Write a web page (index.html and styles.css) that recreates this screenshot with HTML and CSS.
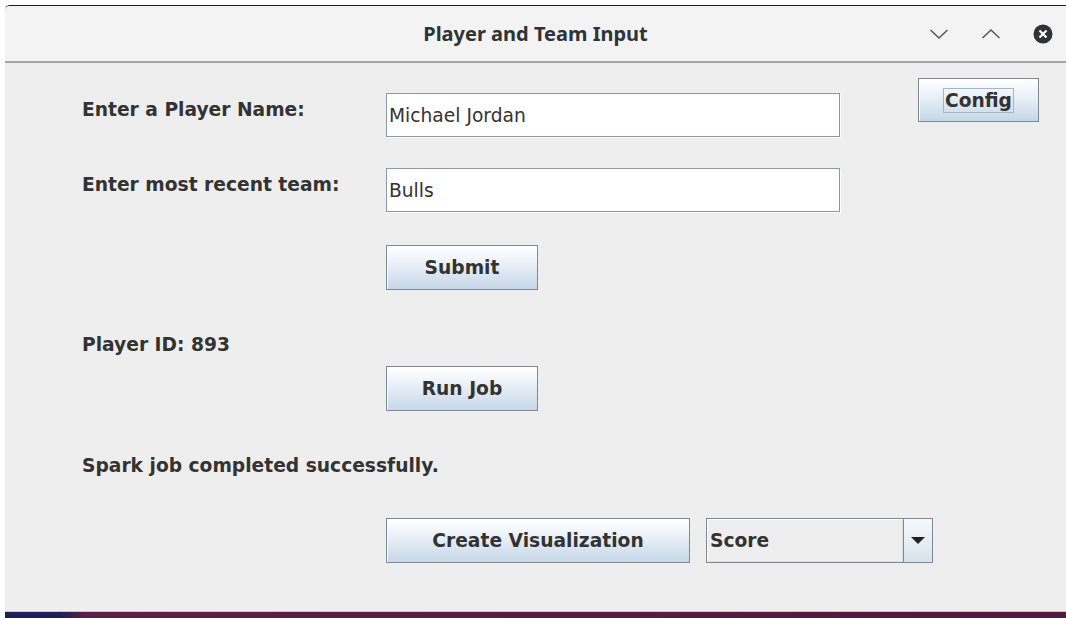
FILE: index.html
```html
<!DOCTYPE html>
<html lang="en">
<head>
<meta charset="utf-8">
<title>Player and Team Input</title>
<link rel="stylesheet" href="styles.css">
</head>
<body>
<div class="window">
  <header class="titlebar">
    <div class="title">Player and Team Input</div>
    <div class="controls">
      <svg class="ctl" viewBox="0 0 20 20" width="20" height="20"><path d="M1.5 6 L10 14 L18.5 6" fill="none" stroke="#555" stroke-width="1.5"/></svg>
      <svg class="ctl" viewBox="0 0 20 20" width="20" height="20"><path d="M1.5 14 L10 6 L18.5 14" fill="none" stroke="#555" stroke-width="1.5"/></svg>
      <svg class="ctl" viewBox="0 0 20 20" width="20" height="20"><circle cx="10" cy="10" r="9.5" fill="#2e3436"/><path d="M6.5 6.5 L13.5 13.5 M13.5 6.5 L6.5 13.5" stroke="#fff" stroke-width="2.2"/></svg>
    </div>
  </header>
  <main class="content">
    <section class="form">
      <div class="row row-name">
        <label class="label">Enter a Player Name:</label>
        <input class="field" type="text" value="Michael Jordan">
      </div>
      <div class="row row-team">
        <label class="label">Enter most recent team:</label>
        <input class="field" type="text" value="Bulls">
      </div>
      <div class="row row-action row-submit">
        <button class="btn">Submit</button>
      </div>
      <div class="status status-id">Player ID: 893</div>
      <div class="row row-action row-run">
        <button class="btn">Run Job</button>
      </div>
      <div class="status status-spark">Spark job completed successfully.</div>
      <div class="row row-action row-viz">
        <button class="btn btn-wide">Create Visualization</button>
        <div class="combo">
          <div class="combo-value">Score</div>
          <div class="combo-arrow"><svg viewBox="0 0 14 8" width="14" height="8"><path d="M0 0 H14 L7 7 Z" fill="#222"/></svg></div>
        </div>
      </div>
    </section>
    <aside class="side">
      <button class="btn btn-config"><span class="focus">Config</span></button>
    </aside>
  </main>
</div>
<div class="desktop"></div>
</body>
</html>
```
FILE: styles.css
```css
* { box-sizing: border-box; }

body {
  margin: 0;
  width: 1066px;
  height: 618px;
  overflow: hidden;
  background: #ffffff;
  font-family: "DejaVu Sans", sans-serif;
}

.window {
  margin: 5px 0 0 5px;
  height: 607px;
  display: flex;
  flex-direction: column;
  background: #eeeeee;
  border-top: 1px solid #1e1e1e;
  border-top-left-radius: 5px;
  border-bottom: 1px solid #c8c8c8;
  overflow: hidden;
}

.titlebar {
  height: 57px;
  flex: none;
  background: #f3f3f3;
  border-bottom: 2px solid #a3a3a3;
  display: grid;
  grid-template-columns: 1fr auto 1fr;
  align-items: center;
}

.title {
  grid-column: 2;
  font-family: "Noto Sans", sans-serif;
  font-weight: 700;
  font-size: 20px;
  color: #2e3436;
}

.controls {
  grid-column: 3;
  justify-self: end;
  display: flex;
  align-items: center;
  gap: 32px;
  padding-right: 13px;
}

.ctl { display: block; }

.content {
  flex: 1;
  display: flex;
  min-width: 0;
}

.form {
  flex: 1;
  min-width: 0;
  display: flex;
  flex-direction: column;
  padding: 30px 0 0 77px;
}

.row {
  display: flex;
  align-items: center;
}

.label {
  width: 304px;
  flex: none;
  font-weight: 700;
  font-size: 14pt;
  color: #333333;
  padding-bottom: 12px;
}

.field {
  width: 454px;
  flex: none;
  height: 44px;
  margin: 0;
  padding: 0 2px;
  border: 1px solid #8a99a8;
  box-shadow: 1px 1px 0 #ffffff;
  background: #ffffff;
  font-family: "DejaVu Sans", sans-serif;
  font-size: 14pt;
  color: #333333;
  outline: none;
}

.row-team { margin-top: 31px; }
.row-action { padding-left: 304px; }
.row-submit { margin-top: 33px; }
.row-run { margin-top: 9px; }
.row-viz { margin-top: 40px; }

.status {
  height: 24px;
  line-height: 24px;
  font-weight: 700;
  font-size: 14pt;
  color: #333333;
  white-space: nowrap;
}

.status-id { margin-top: 43px; }
.status-spark { margin-top: 43px; }

.btn {
  width: 152px;
  height: 45px;
  flex: none;
  margin: 0;
  padding: 0;
  border: 1px solid #7a8a99;
  background: linear-gradient(to bottom, #ffffff 0%, #eef3f9 35%, #dbe6f1 65%, #c6d6e7 100%);
  box-shadow: inset 1px 1px 0 #ffffff;
  font-family: "DejaVu Sans", sans-serif;
  font-weight: 700;
  font-size: 14pt;
  color: #333333;
  display: flex;
  align-items: center;
  justify-content: center;
}

.btn-wide { width: 304px; }

.combo {
  margin-left: 16px;
  width: 227px;
  height: 45px;
  flex: none;
  display: flex;
  border: 1px solid #7a8a99;
  background: #eeeeee;
}

.combo-value {
  flex: 1;
  display: flex;
  align-items: center;
  padding-left: 3px;
  font-weight: 700;
  font-size: 14pt;
  color: #333333;
  box-shadow: inset 1px 1px 0 #ffffff, inset -1px -1px 0 #d8dfe6;
}

.combo-arrow {
  width: 29px;
  border-left: 1px solid #7a8a99;
  display: flex;
  align-items: center;
  justify-content: center;
  background: linear-gradient(to bottom, #f6f8fb 0%, #e6edf4 60%, #d6e1ec 100%);
}

.combo-arrow svg { display: block; }

.side {
  flex: none;
  padding: 15px 27px 0 0;
}

.btn-config {
  width: 121px;
  height: 44px;
}

.focus {
  display: block;
  border: 1px solid #a3b5c8;
  padding: 0 1px;
  line-height: 23px;
}

.desktop {
  margin-left: 5px;
  height: 6px;
  background: linear-gradient(90deg, #1d1f55 0px, #1f1f55 55px, #5a1f47 80px, #4f1b3f 100%);
}
```
